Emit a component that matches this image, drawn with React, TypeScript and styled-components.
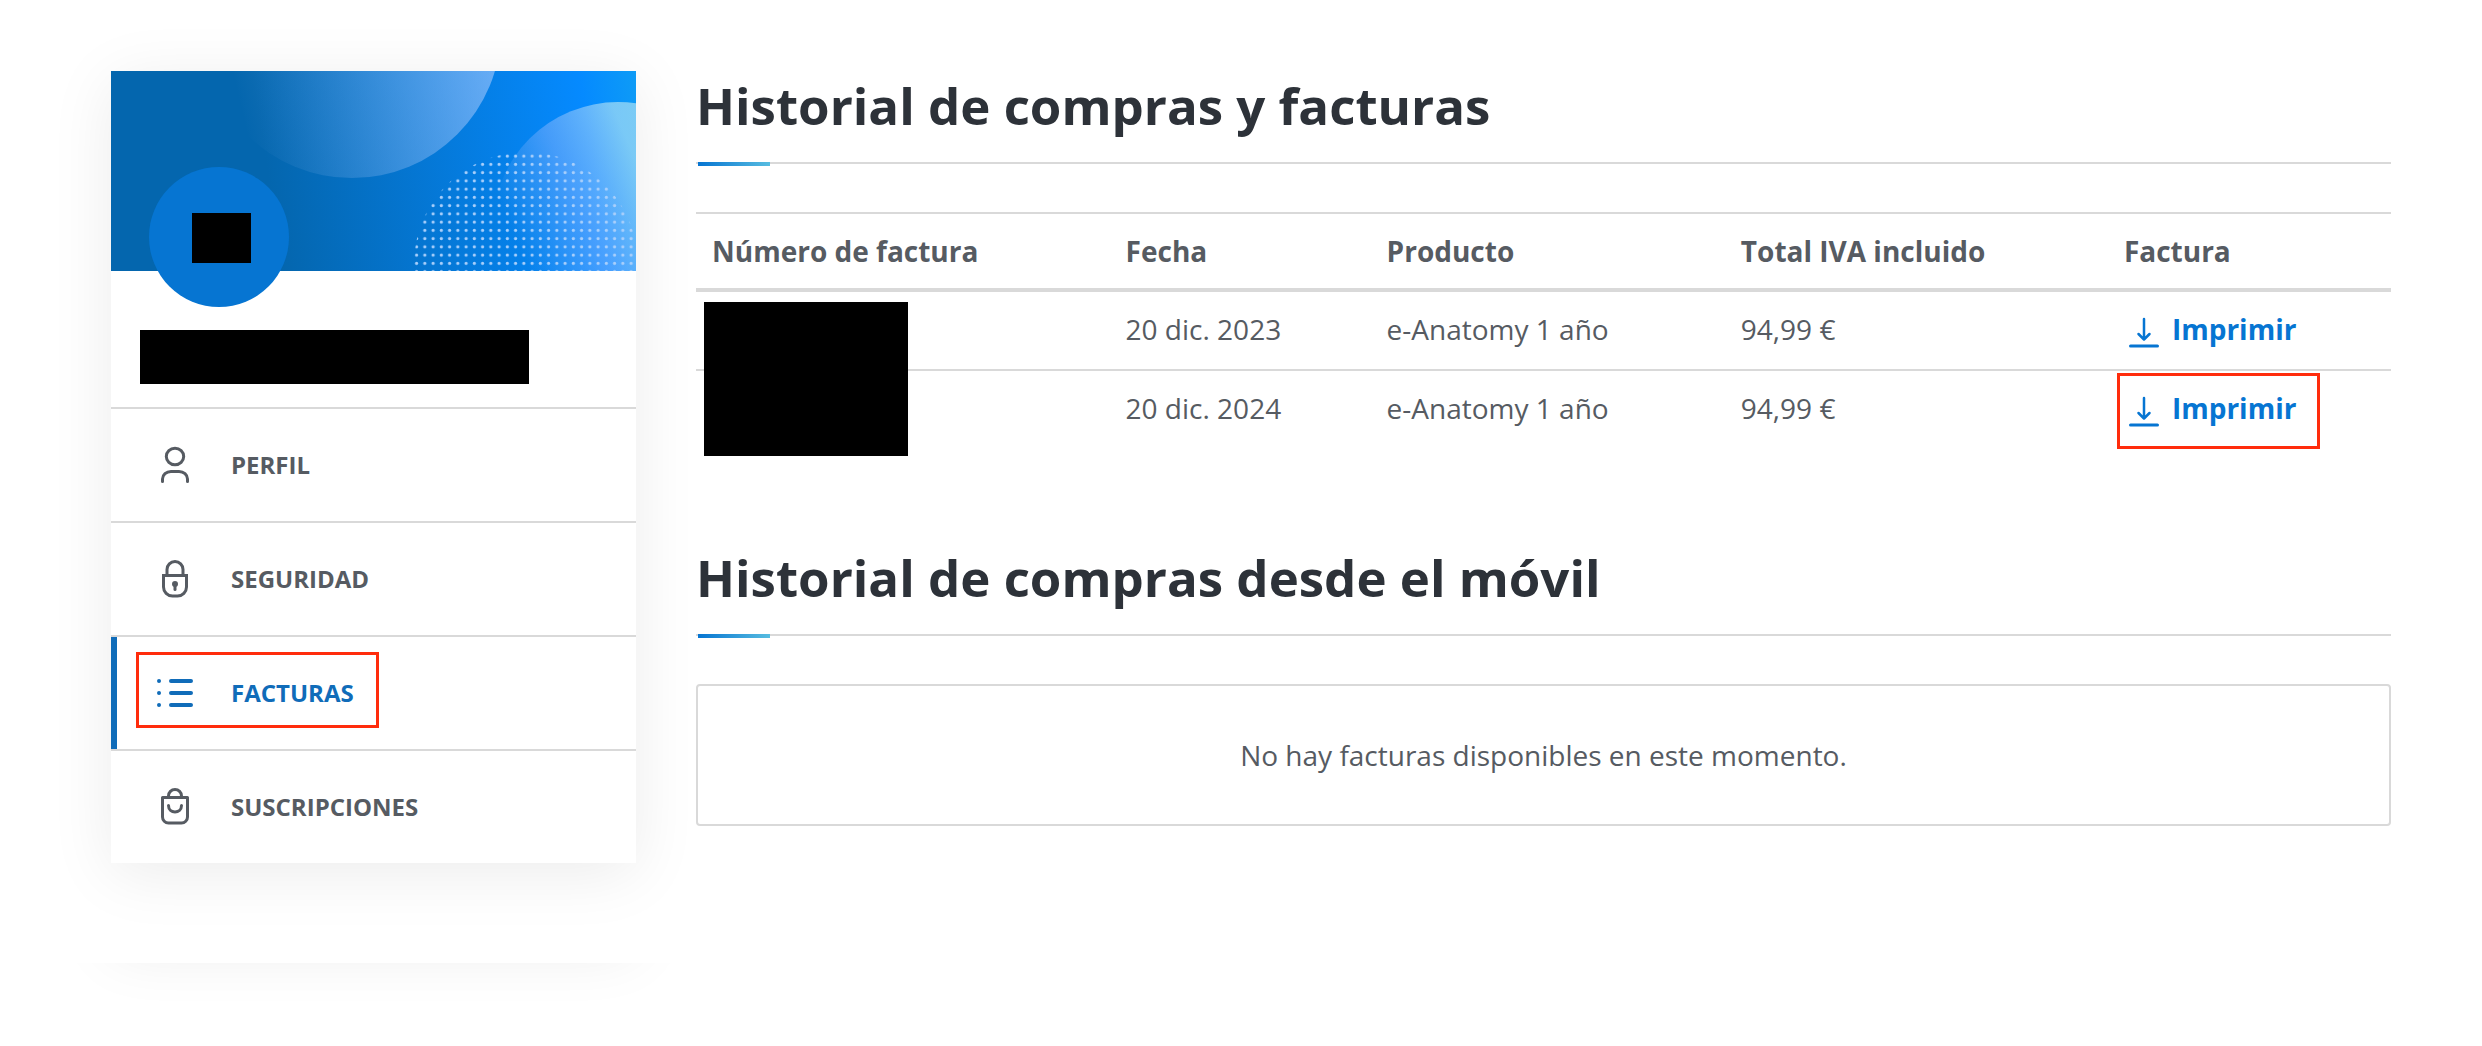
import React from "react";
import styled, { createGlobalStyle, css } from "styled-components";

const GlobalStyle = createGlobalStyle`
  * { box-sizing: border-box; }
  body {
    margin: 0;
    background: #fff;
    color: #565b62;
    font-family: "Open Sans", "Noto Sans", sans-serif;
    font-size: 28px;
    line-height: 40px;
  }
`;

const Page = styled.div`
  display: flex;
  align-items: flex-start;
  gap: 60px;
  padding: 71px 91px 0 111px;
`;

const Sidebar = styled.aside`
  flex: 0 0 525px;
`;

const Card = styled.div`
  background: #fff;
  box-shadow: 0 10px 60px rgba(0, 0, 0, 0.08);
`;

const NextCardShadow = styled.div`
  height: 80px;
  margin: 100px -60px 0;
  overflow: hidden;

  &::before {
    content: "";
    display: block;
    height: 100px;
    margin: -120px 60px 0;
    box-shadow: 0 10px 60px rgba(0, 0, 0, 0.08);
  }
`;

const Banner = styled.div`
  position: relative;
  height: 200px;
`;

const BannerArt = styled.svg`
  display: block;
  width: 100%;
  height: 100%;
`;

const Avatar = styled.div`
  position: absolute;
  left: 38px;
  bottom: -36px;
  display: flex;
  align-items: center;
  justify-content: center;
  width: 140px;
  height: 140px;
  padding: 2px 0 0 4px;
  border-radius: 50%;
  background: #0675d2;
`;

const Initials = styled.span`
  width: 59px;
  height: 50px;
  background: #000;
`;

const Identity = styled.div`
  padding: 59px 29px 23px;
`;

const NameBar = styled.div`
  width: 389px;
  height: 54px;
  background: #000;
`;

const MenuLink = styled.a<{ $active?: boolean }>`
  position: relative;
  display: flex;
  align-items: center;
  gap: 36px;
  height: 114px;
  padding-left: 44px;
  border-top: 2px solid #d9d9d9;
  color: #565b62;
  font-size: 24px;
  font-weight: 700;
  text-decoration: none;
  text-transform: uppercase;

  svg {
    width: 40px;
    height: 40px;
    fill: none;
    stroke: currentColor;
    stroke-width: 3;
    stroke-linecap: round;
  }

  ${(p) =>
    p.$active &&
    css`
      color: #106cb9;
      &::before {
        content: "";
        position: absolute;
        left: 0;
        top: 0;
        bottom: 0;
        width: 6px;
        background: #106cb9;
      }
    `}
`;

const Mark = styled.span<{ $left: number; $top: number; $width: number }>`
  position: absolute;
  left: ${(p) => p.$left}px;
  top: ${(p) => p.$top}px;
  width: ${(p) => p.$width}px;
  height: 76px;
  border: 3px solid #ff2c0c;
  pointer-events: none;
`;

const Main = styled.main`
  flex: 1;
  min-width: 0;
`;

const Section = styled.section`
  & + & {
    margin-top: 95px;
  }
`;

const Title = styled.h2`
  position: relative;
  margin: 0 0 48px;
  padding-bottom: 23px;
  border-bottom: 2px solid #d9d9d9;
  color: #2d3239;
  font-size: 51px;
  font-weight: 700;
  line-height: 68px;

  &::after {
    content: "";
    position: absolute;
    left: 2px;
    bottom: -4px;
    width: 72px;
    height: 4px;
    background: linear-gradient(90deg, #0675d2, #57bce0);
  }
`;

const Table = styled.table`
  width: 100%;
  table-layout: fixed;
  border-spacing: 0;
  border-top: 2px solid #d9d9d9;
  text-align: left;
`;

const Col = styled.col<{ $share: number }>`
  width: ${(p) => p.$share}%;
`;

const HeadCell = styled.th`
  height: 78px;
  padding: 0 16px;
  border-bottom: 4px solid #d9d9d9;
  font-weight: 700;
`;

const Cell = styled.td`
  position: relative;
  height: 77px;
  padding: 0 16px 4px;

  tr + tr > & {
    height: 79px;
    border-top: 2px solid #d9d9d9;
  }
`;

const NumberCover = styled.div`
  position: absolute;
  z-index: 1;
  left: 8px;
  top: 10px;
  width: 204px;
  height: 154px;
  background: #000;
`;

const PrintLink = styled.a`
  display: flex;
  align-items: center;
  gap: 8px;
  width: max-content;
  color: #0675d2;
  font-weight: 700;
  text-decoration: none;

  svg {
    width: 40px;
    height: 40px;
    fill: none;
    stroke: currentColor;
  }
`;

const Empty = styled.p`
  margin: 0;
  padding: 49px 20px;
  border: 2px solid #d9d9d9;
  border-radius: 4px;
  text-align: center;
`;

const ProfileIcon = () => (
  <svg viewBox="0 0 40 40" aria-hidden="true">
    <ellipse cx="20" cy="11.500" rx="8.700" ry="8.200" />
    <path d="M7.500 36.500V34a8.500 7.500 0 0 1 8.500-7.500h8a8.500 7.500 0 0 1 8.500 7.500v2.500" />
  </svg>
);

const LockIcon = () => (
  <svg viewBox="0 0 40 40" aria-hidden="true">
    <path d="M12 16V10.500a8 8 0 0 1 16 0V16" />
    <path d="M8.500 16.500h23v11.500a9 9 0 0 1-9 9h-5a9 9 0 0 1-9-9z" />
    <circle cx="20" cy="25" r="1.500" />
    <path d="M20 26v4.500" />
  </svg>
);

const ListIcon = () => (
  <svg viewBox="0 0 40 40" aria-hidden="true">
    <path d="M16 8h20M16 20h20M16 32h20M4 8h0.010M4 20h0.010M4 32h0.010" strokeWidth="4" />
  </svg>
);

const BagIcon = () => (
  <svg viewBox="0 0 40 40" aria-hidden="true">
    <path d="M7.500 10.500h25V30a6 6 0 0 1-6 6h-13a6 6 0 0 1-6-6z" strokeLinejoin="round" />
    <path d="M13.500 10V9a6.500 6.500 0 0 1 13 0v1" />
    <path d="M13.500 18.500c0 8.500 13 8.500 13 0" />
  </svg>
);

const DownloadIcon = () => (
  <svg viewBox="0 0 40 40" aria-hidden="true">
    <path d="M20 10v20M14.500 25l5.500 5.500L25.500 25" strokeWidth="2.500" strokeLinecap="round" strokeLinejoin="round" />
    <path d="M6.500 37h27" strokeWidth="3" strokeLinecap="round" />
  </svg>
);

const Artwork = () => (
  <BannerArt viewBox="0 0 525 200" preserveAspectRatio="xMidYMid slice" aria-hidden="true">
    <defs>
      <linearGradient id="sky" gradientUnits="userSpaceOnUse" x1="150" y1="60" x2="540" y2="0">
        <stop offset="0" stopColor="#0466ae" />
        <stop offset="0.820" stopColor="#058aff" />
        <stop offset="1" stopColor="#10a0f4" />
      </linearGradient>
      <linearGradient id="disc" gradientUnits="userSpaceOnUse" x1="135" y1="60" x2="390" y2="0">
        <stop offset="0" stopColor="#a5c5f5" stopOpacity="0" />
        <stop offset="1" stopColor="#bcd2ff" stopOpacity="0.550" />
      </linearGradient>
      <linearGradient id="glow" gradientUnits="userSpaceOnUse" x1="395" y1="145" x2="525" y2="90">
        <stop offset="0" stopColor="#8fb8ff" stopOpacity="0" />
        <stop offset="0.500" stopColor="#94b8ff" stopOpacity="0.450" />
        <stop offset="1" stopColor="#c4ecf4" stopOpacity="0.600" />
      </linearGradient>
      <pattern id="dots" patternUnits="userSpaceOnUse" x="301.500" y="81" width="8.250" height="8.250">
        <circle cx="4.100" cy="4.100" r="1.600" fill="#a9cffb" />
      </pattern>
    </defs>
    <rect width="525" height="200" fill="url(#sky)" />
    <circle cx="241" cy="-42" r="149" fill="url(#disc)" />
    <circle cx="507" cy="156" r="125" fill="url(#glow)" />
    <circle cx="415" cy="193" r="112" fill="url(#dots)" />
  </BannerArt>
);

const menu = [
  { label: "Perfil", icon: <ProfileIcon /> },
  { label: "Seguridad", icon: <LockIcon /> },
  { label: "Facturas", icon: <ListIcon />, active: true },
  { label: "Suscripciones", icon: <BagIcon /> },
];

const invoices = [
  { date: "20 dic. 2023", product: "e-Anatomy 1 año", total: "94,99 €" },
  { date: "20 dic. 2024", product: "e-Anatomy 1 año", total: "94,99 €", marked: true },
];

export default function App() {
  return (
    <>
      <GlobalStyle />
      <Page>
        <Sidebar>
          <Card>
            <Banner>
              <Artwork />
              <Avatar>
                <Initials />
              </Avatar>
            </Banner>
            <Identity>
              <NameBar />
            </Identity>
            <nav>
              {menu.map((item) => (
                <MenuLink key={item.label} href="#" $active={item.active}>
                  {item.icon}
                  {item.label}
                  {item.active && <Mark $left={25} $top={15} $width={243} />}
                </MenuLink>
              ))}
            </nav>
          </Card>
          <NextCardShadow />
        </Sidebar>
        <Main>
          <Section>
            <Title>Historial de compras y facturas</Title>
            <Table>
              <colgroup>
                <Col $share={24.4} />
                <Col $share={15.4} />
                <Col $share={20.9} />
                <Col $share={22.6} />
                <Col $share={16.7} />
              </colgroup>
              <thead>
                <tr>
                  <HeadCell>Número de factura</HeadCell>
                  <HeadCell>Fecha</HeadCell>
                  <HeadCell>Producto</HeadCell>
                  <HeadCell>Total IVA incluido</HeadCell>
                  <HeadCell>Factura</HeadCell>
                </tr>
              </thead>
              <tbody>
                {invoices.map((row, i) => (
                  <tr key={row.date}>
                    <Cell>{i === 0 && <NumberCover />}</Cell>
                    <Cell>{row.date}</Cell>
                    <Cell>{row.product}</Cell>
                    <Cell>{row.total}</Cell>
                    <Cell>
                      <PrintLink href="#">
                        <DownloadIcon />
                        Imprimir
                      </PrintLink>
                      {row.marked && <Mark $left={9} $top={2} $width={203} />}
                    </Cell>
                  </tr>
                ))}
              </tbody>
            </Table>
          </Section>
          <Section>
            <Title>Historial de compras desde el móvil</Title>
            <Empty>No hay facturas disponibles en este momento.</Empty>
          </Section>
        </Main>
      </Page>
    </>
  );
}
